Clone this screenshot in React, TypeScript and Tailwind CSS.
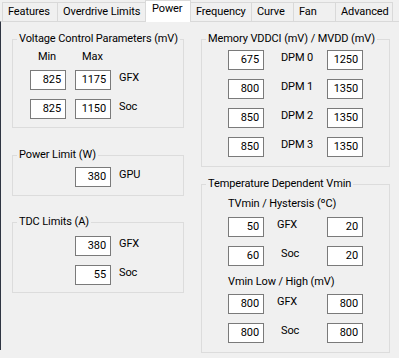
import clsx from "clsx";
import type { ReactNode } from "react";

interface TabProps {
    label: string;
    className: string;
    active?: boolean;
}

function Tab({ label, className, active }: TabProps) {
    if (active) {
        return (
            <div className={clsx("relative z-10 h-[22px] -mb-[1px] bg-white border-t border-l border-r border-[#d9d9d9] pl-[6px] pt-[1px]", className)}>
                {label}
            </div>
        );
    }
    return (
        <div className={clsx("h-[19px] bg-[#f0f0f0] border-t border-[#d9d9d9] pl-[5px] pt-[2px] whitespace-nowrap", className)}>
            {label}
        </div>
    );
}

interface GroupProps {
    title: string;
    outer: string;
    inner: string;
    children: ReactNode;
}

// windows style group box, the title sits on the top border
function Group({ title, outer, inner, children }: GroupProps) {
    return (
        <div className={clsx("border border-[#dcdcdc]", outer)}>
            <div className="-mt-[8px] ml-[4px] px-[2px] w-fit bg-[#f0f0f0] whitespace-nowrap">{title}</div>
            <div className={inner}>{children}</div>
        </div>
    );
}

function Box({ value, className }: { value: string; className?: string }) {
    return (
        <div className={clsx("w-[36px] h-[20px] shrink-0 border border-[#7a7a7a] bg-white text-right pr-[4px] leading-[18px]", className)}>
            {value}
        </div>
    );
}

// two boxes and a label on the right (left column)
function PairRow({ min, max, label }: { min: string; max: string; label: string }) {
    return (
        <div className="flex items-start">
            <Box value={min} />
            <Box value={max} className="ml-[9px]" />
            <span className="ml-[8px] pt-[1px]">{label}</span>
        </div>
    );
}

function SingleRow({ value, label }: { value: string; label: string }) {
    return (
        <div className="flex items-start">
            <Box value={value} />
            <span className="ml-[8px] pt-[1px]">{label}</span>
        </div>
    );
}

// box, label in the middle, box (right column)
function TriRow({ left, right, label, pad }: { left: string; right: string; label: string; pad: string }) {
    return (
        <div className="flex items-start">
            <Box value={left} />
            <span className={clsx("w-[63px] pt-[1px] whitespace-nowrap", pad)}>{label}</span>
            <Box value={right} />
        </div>
    );
}

export default function App() {
    return (
        <div className="w-[399px] h-[358px] bg-[#f0f0f0] overflow-hidden text-[11px] leading-[14px] tracking-[-0.1px] text-black font-['Roboto',sans-serif]">
            <div className="flex items-end h-[21px] pl-[2px]">
                <Tab label="Features" className="w-[55px] border-l" />
                <Tab label="Overdrive Limits" className="w-[88px] border-l" />
                <Tab label="Power" className="w-[46px]" active />
                <Tab label="Frequency" className="w-[60px]" />
                <Tab label="Curve" className="w-[42px] border-l" />
                <Tab label="Fan" className="w-[42px] border-l" />
                <Tab label="Advanced" className="w-[58px] border-l border-r" />
            </div>

            <div className="h-[329px] border-t border-l border-t-[#d9d9d9] border-l-[#2f3542] flex pl-[11px] gap-[17px]">
                <div className="flex flex-col w-[172px]">
                    <Group title="Voltage Control Parameters (mV)" outer="mt-[17px]" inner="pl-[17px] pt-[4px] pb-[8px]">
                        <div className="flex h-[14px]">
                            <span className="ml-[8px] w-[37px]">Min</span>
                            <span className="ml-[7px]">Max</span>
                        </div>
                        <div className="mt-[6px] flex flex-col gap-[9px]">
                            <PairRow min="825" max="1175" label="GFX" />
                            <PairRow min="825" max="1150" label="Soc" />
                        </div>
                    </Group>

                    <Group title="Power Limit (W)" outer="mt-[27px]" inner="pl-[62px] pt-[5px] pb-[8px]">
                        <SingleRow value="380" label="GPU" />
                    </Group>

                    <Group title="TDC Limits (A)" outer="mt-[26px]" inner="pl-[62px] pt-[7px] pb-[7px]">
                        <div className="flex flex-col gap-[9px]">
                            <SingleRow value="380" label="GFX" />
                            <SingleRow value="55" label="Soc" />
                        </div>
                    </Group>
                </div>

                <div className="flex flex-col w-[189px]">
                    <Group title="Memory VDDCI (mV) / MVDD (mV)" outer="mt-[17px]" inner="pl-[26px] pt-[4px] pb-[9px]">
                        <div className="flex flex-col gap-[9px]">
                            <TriRow left="675" label="DPM 0" right="1250" pad="pl-[17px]" />
                            <TriRow left="800" label="DPM 1" right="1350" pad="pl-[17px]" />
                            <TriRow left="850" label="DPM 2" right="1350" pad="pl-[17px]" />
                            <TriRow left="850" label="DPM 3" right="1350" pad="pl-[17px]" />
                        </div>
                    </Group>

                    <Group title="Temperature Dependent Vmin" outer="mt-[17px]" inner="pl-[26px] pt-[6px] pb-[9px]">
                        <div>TVmin / Hystersis (ºC)</div>
                        <div className="mt-[6px] flex flex-col gap-[9px]">
                            <TriRow left="50" label="GFX" right="20" pad="pl-[13px]" />
                            <TriRow left="60" label="Soc" right="20" pad="pl-[17px]" />
                        </div>
                        <div className="mt-[9px]">Vmin Low / High (mV)</div>
                        <div className="mt-[5px] flex flex-col gap-[9px]">
                            <TriRow left="800" label="GFX" right="800" pad="pl-[13px]" />
                            <TriRow left="800" label="Soc" right="800" pad="pl-[17px]" />
                        </div>
                    </Group>
                </div>
            </div>
        </div>
    );
}
